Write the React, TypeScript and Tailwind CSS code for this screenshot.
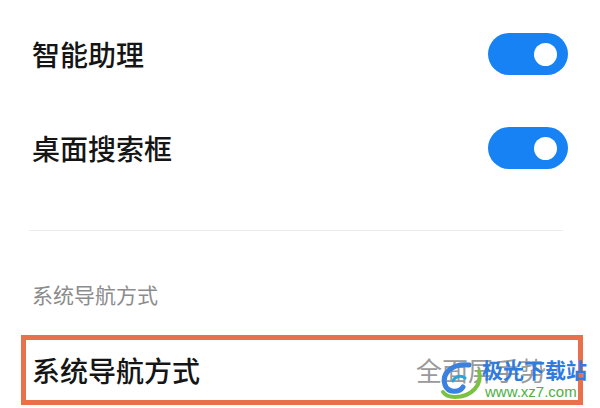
import React from 'react';

const Toggle = () => (
  <div className="w-[80px] h-[42px] rounded-full bg-[#1682f4] flex items-center justify-end pr-[11px]">
    <div className="w-[23px] h-[23px] rounded-full bg-white" />
  </div>
);

const SwitchRow = ({ label }: { label: string }) => (
  <div className="h-[94px] flex items-center justify-between pl-[32px] pr-[32px]">
    <span className="text-[28px] font-medium text-[#151515] leading-none">{label}</span>
    <Toggle />
  </div>
);

const Watermark = () => (
  <div className="absolute left-[438px] top-[357px] flex items-start pointer-events-none">
    <svg width="48" height="42" viewBox="0 0 46 42" className="mt-[2px]">
      <path d="M30 6 C14 4 2 14 6 26 C9 34 20 34 24 28" fill="none" stroke="#3b82e0" strokeWidth="5" strokeLinecap="round" />
      <path d="M40 12 C44 26 32 38 16 38 C10 38 6 36 4 33" fill="none" stroke="#7cc242" strokeWidth="4" strokeLinecap="round" />
      <path d="M14 22 C16 17 22 16 26 19" fill="none" stroke="#2aa5d8" strokeWidth="3" strokeLinecap="round" />
    </svg>
    <div className="flex flex-col ml-[-4px]">
      <span className="text-[21px] font-bold text-[#2f7be0] leading-[25px]">极光下载站</span>
      <span className="text-[15px] text-[#4cb043] leading-[17px] font-['Liberation_Sans',sans-serif] ml-[3px] mt-[1px]">www.xz7.com</span>
    </div>
  </div>
);

const App = () => {
  return (
    <div className="relative w-[600px] h-[408px] bg-white overflow-hidden font-['Noto_Sans_CJK_SC','Noto_Sans',sans-serif]">
      <div className="pt-[7px]">
        <SwitchRow label="智能助理" />
        <SwitchRow label="桌面搜索框" />
      </div>
      <div className="mt-[35px] ml-[29px] w-[534px] h-[1px] bg-[#ececec]" />
      <div className="mt-[48px] pl-[32px] h-[30px] flex items-center text-[21px] text-[#8c8c8c] leading-none">
        系统导航方式
      </div>
      <div className="mt-[26px] ml-[21px] w-[562px] h-[70px] border-[5px] border-[#e9704a] flex items-center justify-between pl-[6px] pr-[18px]">
        <span className="text-[28px] font-medium text-[#151515] leading-none">系统导航方式</span>
        <div className="flex items-center gap-[6px] text-[#9a9a9a]">
          <span className="text-[26px] leading-none">全面屏手势</span>
          <svg width="8" height="14" viewBox="0 0 8 14">
            <path d="M1 1 L7 7 L1 13" fill="none" stroke="#b5b5b5" strokeWidth="1.6" />
          </svg>
        </div>
      </div>
      <Watermark />
    </div>
  );
};

export default App;
